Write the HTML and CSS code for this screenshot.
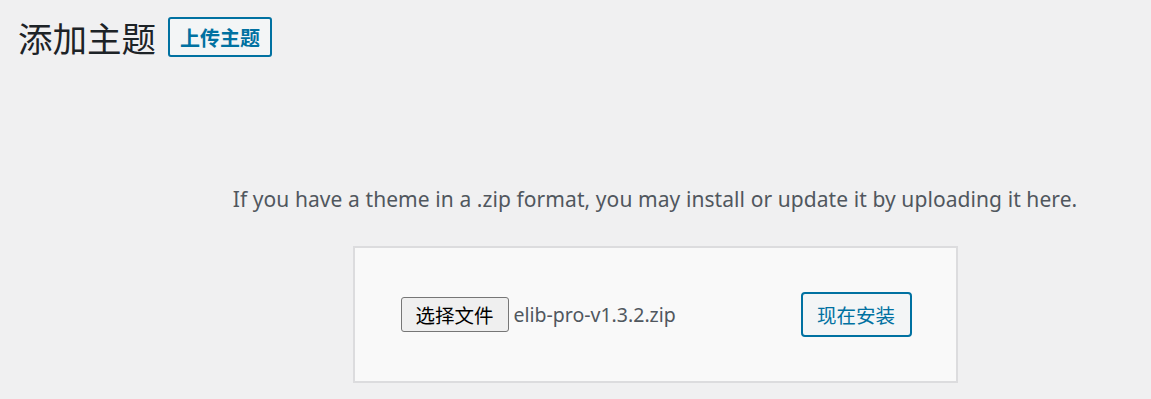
FILE: index.html
```html
<!DOCTYPE html>
<html lang="zh-CN">
<head>
<meta charset="utf-8">
<title>添加主题</title>
<link rel="stylesheet" href="styles.css">
</head>
<body>
<div class="wrap">
  <div class="page-head">
    <h1 class="page-title">添加主题</h1>
    <a class="title-action">上传主题</a>
  </div>
  <div class="upload-section">
    <p class="install-help">If you have a theme in a .zip format, you may install or update it by uploading it here.</p>
    <form class="upload-form">
      <div class="file-field">
        <span class="file-button">选择文件</span>
        <span class="file-name">elib-pro-v1.3.2.zip</span>
      </div>
      <button type="button" class="install-button">现在安装</button>
    </form>
  </div>
</div>
</body>
</html>
```

FILE: styles.css
```css
html, body {
  margin: 0;
  padding: 0;
  background: #f0f0f1;
  overflow: hidden;
}
body {
  font-family: "Noto Sans", "Open Sans", "Noto Sans CJK SC", sans-serif;
  color: #3c434a;
}
.wrap {
  width: 100%;
}
.page-head {
  display: flex;
  align-items: center;
  padding: 17px 0 0 18px;
  height: 40px;
}
.page-title {
  margin: 0;
  font-family: "Noto Sans CJK SC", sans-serif;
  font-weight: 400;
  font-size: 34.5px;
  line-height: 40px;
  color: #1d2327;
}
.title-action {
  margin-left: 12px;
  box-sizing: border-box;
  height: 40px;
  width: 104px;
  display: flex;
  align-items: center;
  justify-content: center;
  border: 2px solid #0071a1;
  border-radius: 3px;
  background: #f3f5f6;
  color: #0071a1;
  font-family: "Noto Sans CJK SC", sans-serif;
  font-weight: 700;
  font-size: 20px;
  text-decoration: none;
}
.upload-section {
  box-sizing: border-box;
  width: 100%;
  padding: 125px 0 0 159px;
  display: flex;
  flex-direction: column;
  align-items: center;
}
.install-help {
  margin: 0;
  white-space: nowrap;
  font-size: 21px;
  line-height: 34px;
  color: #50575e;
  letter-spacing: 0.08px;
}
.upload-form {
  box-sizing: border-box;
  width: 605px;
  height: 137px;
  margin: 30px 0 0;
  border: 2px solid #dcdcde;
  background: #f9f9f9;
  display: flex;
  align-items: center;
  justify-content: space-between;
  padding: 0 44px 0 46px;
}
.file-field {
  display: flex;
  align-items: center;
  gap: 5px;
}
.file-button {
  box-sizing: border-box;
  width: 108px;
  height: 35px;
  display: flex;
  align-items: center;
  justify-content: center;
  background: #efefef;
  border: 1px solid #767676;
  border-radius: 3px;
  color: #000;
  font-family: "Noto Sans CJK SC", sans-serif;
  font-size: 19.5px;
}
.file-name {
  font-size: 19.5px;
  color: #50575e;
}
.install-button {
  box-sizing: border-box;
  width: 111px;
  height: 45px;
  border: 2px solid #0071a1;
  border-radius: 4px;
  background: #f3f5f6;
  color: #0071a1;
  font-family: "Noto Sans CJK SC", sans-serif;
  font-size: 19.5px;
  padding: 0;
}
```
